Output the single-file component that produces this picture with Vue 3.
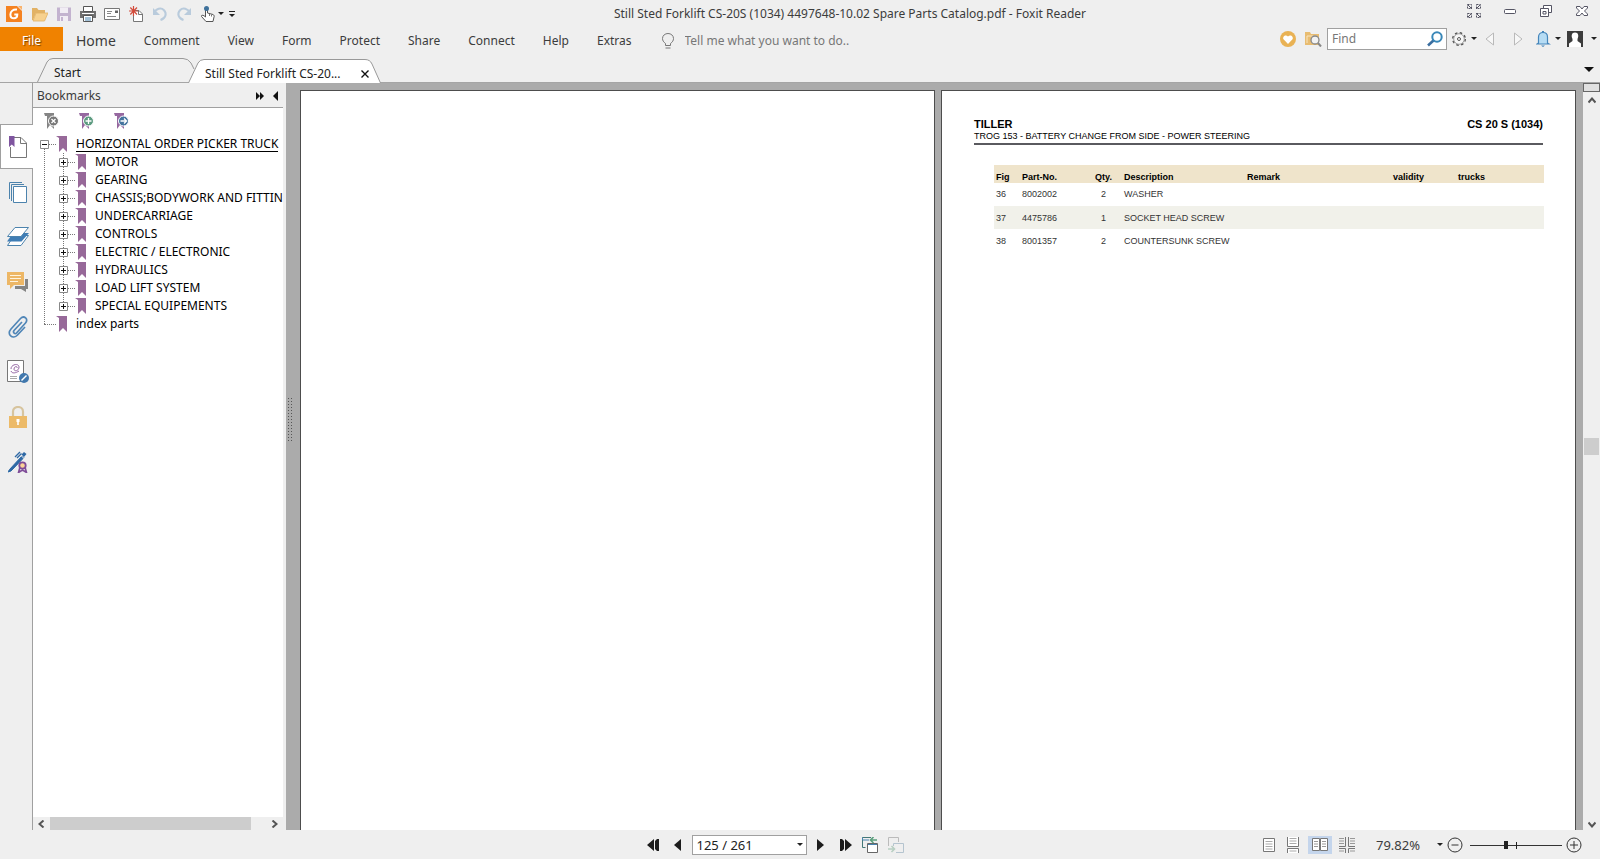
<script setup>
import { ref } from 'vue'

const menus = ['Comment', 'View', 'Form', 'Protect', 'Share', 'Connect', 'Help', 'Extras']
const chapters = [
  'MOTOR', 'GEARING', 'CHASSIS;BODYWORK AND FITTIN', 'UNDERCARRIAGE', 'CONTROLS',
  'ELECTRIC / ELECTRONIC', 'HYDRAULICS', 'LOAD LIFT SYSTEM', 'SPECIAL EQUIPEMENTS'
]
const parts = [
  { fig: 36, no: '8002002', qty: 2, text: 'WASHER' },
  { fig: 37, no: '4475786', qty: 1, text: 'SOCKET HEAD SCREW' },
  { fig: 38, no: '8001357', qty: 2, text: 'COUNTERSUNK SCREW' }
]
const page = ref('125 / 261')
const scale = ref('79.82%')
const zoom = ref(39)
const query = ref('')
const hint = ref('')
</script>

<template>
  <div class="app">
    <header class="titlebar">
      <div class="quick">
        <button class="logo" aria-label="Foxit Reader"><svg width="16" height="16" viewBox="0 0 16 16"><path d="M0 0H11L16 5V16H0Z" fill="#f58220" /><path d="M12 0H16V4Z" fill="#f9b26b" /><path d="M11 3.600C7 3.200 4.400 5.400 4.400 8.400C4.400 11 6 12.300 8 12.300C10 12.300 11.300 11 11.300 8.500H8.300" fill="none" stroke="#fff" stroke-width="2" /></svg></button>
        <button aria-label="Open"><svg width="16" height="16" viewBox="0 0 16 16"><path d="M0 14V2H5L6.500 4H13V7H4L1 14Z" fill="#e2b265" /><path d="M4 7H16L12.500 15H1Z" fill="#f7d18e" stroke="#e2b265" stroke-width=".8" /></svg></button>
        <button aria-label="Save"><svg width="16" height="16" viewBox="0 0 16 16"><path d="M1 1.500H15V15H1Z" fill="#c3b3cf" /><path d="M4 1.500H12V7H4ZM4 10H12V15H4Z" fill="#f1edf4" /><path d="M5 11H7V15H5Z" fill="#c3b3cf" /></svg></button>
        <button aria-label="Print"><svg width="16" height="16" viewBox="0 0 16 16"><path d="M0 5H16V12H0Z" fill="#707070" /><path d="M3.500 .5H12.500V5.500H3.500Z" fill="#fff" stroke="#555" /><path d="M3.500 9.500H12.500V15.500H3.500Z" fill="#fff" stroke="#555" /><path d="M2 7.500H14" stroke="#fff" /><path d="M5 12H11M5 14H11" stroke="#4782ae" /></svg></button>
        <button aria-label="E-mail"><svg width="16" height="16" viewBox="0 0 16 16"><path d="M.5 2.500H15.500V13.500H.5Z" fill="#fff" stroke="#777" /><path d="M11 4.500H14V7H11Z" fill="#666" /><path d="M3 5.500H8M3 7.500H7M3 10.500H12" stroke="#888" /></svg></button>
        <button aria-label="New from blank"><svg width="16" height="16" viewBox="0 0 16 16"><path d="M5.500 4.500H11L14.500 8V15.500H5.500Z" fill="#fff" stroke="#777" /><path d="M10.500 4.500V8.500H14.500" fill="none" stroke="#777" /><path d="M5.500 0V10M1 5H10M2.300 1.500L9 8.500M9 1.500L2.300 8.500" stroke="#d34b3b" stroke-width="1.200" /></svg></button>
        <button aria-label="Undo"><svg width="16" height="16" viewBox="0 0 16 16"><path d="M2 7C4 2.500 9 1 12 4.200C15 7.500 14 12 8.500 14" fill="none" stroke="#b9cbdc" stroke-width="2" /><path d="M1 2V9H8Z" fill="#b9cbdc" /></svg></button>
        <button aria-label="Redo"><svg width="16" height="16" viewBox="0 0 16 16"><path d="M14 7C12 2.500 7 1 4 4.200C1 7.500 2 12 7.500 14" fill="none" stroke="#b9cbdc" stroke-width="2" /><path d="M15 2V9H8Z" fill="#b9cbdc" /></svg></button>
        <button aria-label="Hand tool"><svg width="24" height="16" viewBox="0 0 24 16"><path d="M5.500 11V3C5.500 1.500 7.500 1.500 7.500 3V7L13 8.500C14 9 14.500 10 14 11L13 15.500H6L1.500 10.500C1 9 3 8.500 5.500 11" fill="#fff" stroke="#555" /><path d="M9.500 8V10M11.500 8.500V10.500" stroke="#777" /><circle cx="6.500" cy="2.500" r="2.500" fill="#3e719b" /><path d="M18 6H24L21 9Z" fill="#222" /></svg></button>
        <button aria-label="Customize toolbar"><svg width="8" height="16" viewBox="0 0 8 16"><path d="M1 5.500H7" stroke="#222" /><path d="M1 8H7L4 11Z" fill="#222" /></svg></button>
      </div>
      <h1>Still Sted Forklift CS-20S (1034) 4497648-10.02 Spare Parts Catalog.pdf - Foxit Reader</h1>
      <div class="window">
        <button aria-label="Full screen"><svg width="14" height="14" viewBox="0 0 14 14"><path d="M.5 .5H4.500V4.500H.5ZM9.500 .5H13.500V4.500H9.500ZM.5 9.500H4.500V13.500H.5ZM9.500 9.500H13.500V13.500H9.500Z" fill="none" stroke="#555564" stroke-dasharray="2 1" /><path d="M1 1L5 5M13 1L9 5M1 13L5 9M13 13L9 9" stroke="#555564" /></svg></button>
        <button aria-label="Minimize"><svg width="12" height="14" viewBox="0 0 12 14"><rect x=".5" y="5.500" width="11" height="4" rx="1" fill="#fff" stroke="#555564" /></svg></button>
        <button aria-label="Restore"><svg width="12" height="14" viewBox="0 0 12 14"><path d="M3.500 4.500V1.500H11.500V8.500H8.500M.5 4.500H8.500V12.500H.5Z" fill="#fff" stroke="#555564" /><path d="M3 7.500H6V10H3Z" fill="none" stroke="#555564" /></svg></button>
        <button aria-label="Close"><svg width="12" height="14" viewBox="0 0 12 14"><path d="M.5 2.500H4L6 5L8 2.500H11.500V4L8.500 7L11.500 10V11.500H8L6 9L4 11.500H.5V10L3.500 7L.5 4Z" fill="#fff" stroke="#555564" /></svg></button>
      </div>
    </header>

    <nav class="ribbon">
      <button class="file">File</button>
      <button class="home">Home</button>
      <button v-for="m in menus" :key="m" class="menu">{{ m }}</button>
      <label class="tell">
        <svg width="12" height="16" viewBox="0 0 12 16"><path d="M3.500 12.500V10.500C1.500 9 .5 7.500 .5 5.500C.5 2.500 3 .5 6 .5S11.500 2.500 11.500 5.500C11.500 7.500 10.500 9 8.500 10.500V12.500ZM3.500 15H8.500" fill="none" stroke="#777" /></svg>
        <input v-model="hint" aria-label="Tell me" placeholder="Tell me what you want to do..">
      </label>
      <div class="tools">
        <button aria-label="Favorite"><svg width="16" height="16" viewBox="0 0 16 16"><circle cx="8" cy="8" r="8" fill="#e9b254" /><path d="M8 13L3.500 8.300C2 6 5.500 2.800 8 5.500C10.500 2.800 14 6 12.500 8.300Z" fill="#fff" /></svg></button>
        <button class="folder" aria-label="Search folder"><svg width="17" height="16" viewBox="0 0 17 16"><path d="M0 14V1H5L6 3H14V14Z" fill="#e8bc70" /><path d="M2 5H12M2 5V12" stroke="#f9e5c1" /><circle cx="10" cy="9" r="4" fill="#f2f2f2" stroke="#888" stroke-width="1.300" /><path d="M13 12L16 15.500" stroke="#888" stroke-width="2" /></svg></button>
        <div class="find">
          <input v-model="query" aria-label="Find" placeholder="Find">
          <button aria-label="Search"><svg width="16" height="16" viewBox="0 0 16 16"><path d="M7 9L1 14.500" stroke="#3b6ea0" stroke-width="2.600" /><circle cx="10" cy="6" r="4.700" fill="#fff" stroke="#3987b8" stroke-width="2" /></svg></button>
        </div>
        <button class="gear" aria-label="Settings"><svg width="26" height="16" viewBox="0 0 26 16"><circle cx="8" cy="8" r="6.300" fill="none" stroke="#555" stroke-width="1.400" stroke-dasharray="2.500 2.450" /><circle cx="8" cy="8" r="5.300" fill="#f7f7f7" stroke="#888" stroke-width=".8" /><circle cx="8" cy="8" r="1.500" fill="#fff" stroke="#555" /><path d="M20 6H26L23 9Z" fill="#222" /></svg></button>
        <button class="prev" aria-label="Previous result"><svg width="10" height="14" viewBox="0 0 10 14"><path d="M8.500 1V13L1 7Z" fill="#f7f7f7" stroke="#b9b9b9" /></svg></button>
        <button class="next" aria-label="Next result"><svg width="10" height="14" viewBox="0 0 10 14"><path d="M1.500 1V13L9 7Z" fill="#f7f7f7" stroke="#b9b9b9" /></svg></button>
        <button class="bell" aria-label="Notifications"><svg width="25" height="16" viewBox="0 0 25 16"><path d="M2.500 12V6C2.500 3 4.500 1.500 7 1.500S11.500 3 11.500 6V12L13 13H1Z" fill="#b6dcf4" stroke="#4586bb" stroke-width="1.200" /><path d="M5 14.500H9L7 16ZM6 0H8V2H6Z" fill="#4586bb" /><path d="M19 6H25L22 9Z" fill="#222" /></svg></button>
        <button class="user" aria-label="Account"><svg width="30" height="16" viewBox="0 0 30 16"><path d="M0 0H16V16H0Z" fill="#3c3c3c" /><path d="M8 1.500C4.500 1.500 4 5 5.500 8V10L2 12.500V16H14V12.500L10.500 10V8C12 5 11.500 1.500 8 1.500Z" fill="#fff" /><path d="M24 6H30L27 9Z" fill="#222" /></svg></button>
      </div>
    </nav>

    <div class="tabs">
      <button class="tab start"><svg width="159" height="24" viewBox="0 0 159 24"><path d="M.5 24L10 4Q12 .5 16 .5H146Q151 .5 154 5L157 11" fill="none" stroke="#999" /></svg><span>Start</span></button>
      <div class="tab doc">
        <svg width="193" height="24" viewBox="0 0 193 24"><path d="M.5 24L10 4Q12 .5 16 .5H177Q182 .5 184 5L192.500 24" fill="#fff" stroke="#999" /></svg>
        <span><button>Still Sted Forklift CS-20...</button><button aria-label="Close tab"><svg width="8" height="8" viewBox="0 0 8 8"><path d="M.5 .5L7.500 7.500M7.500 .5L.5 7.500" stroke="#111" stroke-width="1.400" /></svg></button></span>
      </div>
      <button class="list" aria-label="Tab list"><svg width="10" height="5" viewBox="0 0 10 5"><path d="M0 0H10L5 5Z" fill="#111" /></svg></button>
    </div>

    <main>
      <nav class="rail">
        <button class="on" aria-label="Bookmarks"><svg width="20" height="24" viewBox="0 0 20 24"><path d="M2.500 2.500H13L18.500 8V22.500H2.500V12" fill="#fff" stroke="#777" /><path d="M12.500 2.500V8.500H18.500" fill="none" stroke="#777" /><path d="M1 1H6.500V12L3.800 9.500L1 12Z" fill="#7f559f" /></svg></button>
        <button aria-label="Pages"><svg width="20" height="24" viewBox="0 0 20 24"><path d="M1.500 19V2.500H14M3.500 21V4.500H16" fill="none" stroke="#4c83ad" /><path d="M5.500 6.500H18.500V22.500H5.500Z" fill="#fff" stroke="#4c83ad" /></svg></button>
        <button aria-label="Layers"><svg width="22" height="20" viewBox="0 0 22 20"><path d="M7 8.500H21.500L14 18.500H.5Z" fill="#fff" stroke="#4c83ad" /><path d="M6 6H22L14.500 14.500H0Z" fill="#3f7db5" /><path d="M8 .5H21.500L14 9.500H.5Z" fill="#fff" stroke="#4c83ad" /></svg></button>
        <button aria-label="Comments"><svg width="22" height="20" viewBox="0 0 22 20"><path d="M18 7H21V17H19V20L14 17H8V14H18Z" fill="#858585" /><path d="M0 0H17V13H7L3 17V13H0Z" fill="#edb766" /><path d="M3 3.500H14M3 6.500H14M3 9.500H11" stroke="#fff4df" /></svg></button>
        <button aria-label="Attachments"><svg width="20" height="22" viewBox="0 0 20 22"><path d="M14 6L6 14.500C4.500 16.500 7 18.500 8.500 17L17.500 7C21 3 16 -1 12.500 2.500L3 13C-2 18.500 5 24 9.500 19L17 11" fill="none" stroke="#5086b7" stroke-width="1.700" /></svg></button>
        <button aria-label="Digital signatures"><svg width="22" height="23" viewBox="0 0 22 23"><path d="M.5 .5H16.500V21.500H.5Z" fill="#fff" stroke="#777" /><path d="M4 9C4 4 12 3 12 7C12 11 7 12 7 9C7 6 11 6 10 8M4 11C5 14 9 13 12 11" fill="none" stroke="#9567a4" /><path d="M3 16.500H10M3 18.500H10" stroke="#aaa" /><circle cx="17" cy="18" r="5" fill="#4178ad" /><path d="M14.500 20.500L19.500 15.500" stroke="#fff" stroke-width="1.500" /></svg></button>
        <button aria-label="Security"><svg width="18" height="22" viewBox="0 0 18 22"><path d="M4 11V5.500C4 -.5 14 -.5 14 5.500V11" fill="none" stroke="#d7c49e" stroke-width="2.200" /><path d="M0 10H18V22H0Z" fill="#ecba68" /><path d="M7.500 13H10.500V16H9.800V19H8.200V16H7.500Z" fill="#fff" /></svg></button>
        <button aria-label="Sign"><svg width="20" height="22" viewBox="0 0 20 22"><path d="M14 5L1.500 18.500L0 21L3 20L16 6.500Z" fill="#2e69a5" stroke="#2e69a5" /><path d="M13.500 3.500L16 1L18.500 3L16 6Z" fill="#2e69a5" /><path d="M12 3.500L16.500 8" stroke="#efefef" stroke-width="1" /><path d="M7 6L12 1M9 7L13.500 2.500" stroke="#2e69a5" stroke-width="1.400" /><path d="M12 16L10.500 21.500L14.500 19L18.500 21.500L17 16" fill="none" stroke="#7f4d98" stroke-width="1.600" /><circle cx="14.500" cy="14.500" r="3.200" fill="#fbd497" stroke="#7f4d98" stroke-width="1.800" /></svg></button>
      </nav>

      <aside class="panel">
        <div class="panel-head">
          <h2>Bookmarks</h2>
          <button aria-label="Expand panel"><svg width="8" height="8" viewBox="0 0 8 8"><path d="M0 0L4 4L0 8ZM4 0L8 4L4 8Z" fill="#111" /></svg></button>
          <button aria-label="Collapse panel"><svg width="5" height="10" viewBox="0 0 5 10"><path d="M5 0V10L0 5Z" fill="#111" /></svg></button>
        </div>
        <div class="panel-body">
          <div class="marks">
            <button aria-label="Delete bookmark"><svg width="15" height="17" viewBox="0 0 15 17"><path d="M0 0H10V16L6 12L3 16V3H1Z" fill="#858585" /><circle cx="9.500" cy="8" r="5" fill="#777" stroke="#fff" /><path d="M7.500 6L11.500 10M11.500 6L7.500 10" stroke="#fff" stroke-width="1.300" /></svg></button>
            <button aria-label="New bookmark"><svg width="15" height="17" viewBox="0 0 15 17"><path d="M0 0H10V16L6 12L3 16V3H1Z" fill="#9668a0" /><circle cx="9.500" cy="8" r="5" fill="#5c9b80" stroke="#fff" /><path d="M6.500 8H12.500M9.500 5V11" stroke="#fff" stroke-width="1.300" /></svg></button>
            <button aria-label="Go to bookmark"><svg width="15" height="17" viewBox="0 0 15 17"><path d="M0 0H10V16L6 12L3 16V3H1Z" fill="#9668a0" /><circle cx="9.500" cy="8" r="5" fill="#44749e" stroke="#fff" /><path d="M6.500 8H12M10 5.500L12.500 8L10 10.500" fill="none" stroke="#fff" stroke-width="1.300" /></svg></button>
          </div>
          <ul class="tree">
            <li>
              <div class="row">
                <button class="toggle" aria-label="Collapse"><svg width="9" height="9" viewBox="0 0 9 9"><path d="M.5 .5H8.500V8.500H.5Z" fill="#fff" stroke="#888" /><path d="M2 4.500H7" stroke="#111" /></svg></button>
                <i class="dash"></i>
                <svg class="flag" width="11" height="16" viewBox="0 0 11 16"><path d="M0 0H11V16L7 12L3 16V2Z" fill="#976999" /></svg>
                <a href="#horizontal" class="current">HORIZONTAL ORDER PICKER TRUCK</a>
              </div>
              <ul>
                <li v-for="c in chapters" :key="c" class="row">
                  <button class="toggle" aria-label="Expand"><svg width="9" height="9" viewBox="0 0 9 9"><path d="M.5 .5H8.500V8.500H.5Z" fill="#fff" stroke="#888" /><path d="M2 4.500H7M4.500 2V7" stroke="#111" /></svg></button>
                  <i class="dash"></i>
                  <svg class="flag" width="11" height="16" viewBox="0 0 11 16"><path d="M0 0H11V16L7 12L3 16V2Z" fill="#976999" /></svg>
                  <a href="#chapter">{{ c }}</a>
                </li>
              </ul>
            </li>
            <li class="row leaf">
              <i class="dash"></i>
              <svg class="flag" width="11" height="16" viewBox="0 0 11 16"><path d="M0 0H11V16L7 12L3 16V2Z" fill="#976999" /></svg>
              <a href="#index">index parts</a>
            </li>
          </ul>
        </div>
        <div class="hscroll">
          <button aria-label="Scroll left"><svg width="7" height="8" viewBox="0 0 7 8"><path d="M5.500 .5L1.500 4L5.500 7.500" fill="none" stroke="#555" stroke-width="2" /></svg></button>
          <div class="track"><i></i></div>
          <button aria-label="Scroll right"><svg width="7" height="8" viewBox="0 0 7 8"><path d="M1.500 .5L5.500 4L1.500 7.500" fill="none" stroke="#555" stroke-width="2" /></svg></button>
        </div>
      </aside>

      <div class="splitter"><i></i></div>

      <section class="viewer">
        <article class="sheet"></article>
        <article class="sheet">
          <div class="sheet-head">
            <div>
              <h3>TILLER</h3>
              <p>TROG 153 - BATTERY CHANGE FROM SIDE - POWER STEERING</p>
            </div>
            <strong>CS 20 S (1034)</strong>
          </div>
          <table>
            <colgroup><col class="c-fig"><col class="c-no"><col class="c-qty"><col class="c-text"><col class="c-remark"><col class="c-valid"><col></colgroup>
            <thead>
              <tr><th>Fig</th><th>Part-No.</th><th class="qty">Qty.</th><th>Description</th><th>Remark</th><th>validity</th><th>trucks</th></tr>
            </thead>
            <tbody>
              <tr v-for="p in parts" :key="p.fig">
                <td>{{ p.fig }}</td><td>{{ p.no }}</td><td class="qty">{{ p.qty }}</td><td>{{ p.text }}</td><td></td><td></td><td></td>
              </tr>
            </tbody>
          </table>
        </article>
      </section>

      <div class="vscroll">
        <button class="split" aria-label="Split view"></button>
        <button aria-label="Scroll up"><svg width="8" height="7" viewBox="0 0 8 7"><path d="M.5 5.500L4 1.500L7.500 5.500" fill="none" stroke="#555" stroke-width="2" /></svg></button>
        <div class="track"><i></i></div>
        <button class="down" aria-label="Scroll down"><svg width="8" height="7" viewBox="0 0 8 7"><path d="M.5 1.500L4 5.500L7.500 1.500" fill="none" stroke="#555" stroke-width="2" /></svg></button>
      </div>
    </main>

    <footer>
      <div class="pager">
        <button aria-label="First page"><svg width="12" height="12" viewBox="0 0 12 12"><path d="M7 0V12L0 6ZM10 0H12V12H10L8 10V2Z" fill="#1c1c1c" /><path d="M7.500 0V12" stroke="#efefef" /></svg></button>
        <button class="back" aria-label="Previous page"><svg width="8" height="12" viewBox="0 0 8 12"><path d="M7 0V12L0 6Z" fill="#1c1c1c" /></svg></button>
        <div class="combo">
          <select v-model="page" aria-label="Page"><option>125 / 261</option></select>
          <svg width="6" height="3" viewBox="0 0 6 3"><path d="M0 0H6L3 3Z" fill="#222" /></svg>
        </div>
        <button class="forward" aria-label="Next page"><svg width="8" height="12" viewBox="0 0 8 12"><path d="M0 0V12L7 6Z" fill="#1c1c1c" /></svg></button>
        <button aria-label="Last page"><svg width="12" height="12" viewBox="0 0 12 12"><path d="M5 0V12L12 6ZM2 0H0V12H2L4 10V2Z" fill="#1c1c1c" /><path d="M4.500 0V12" stroke="#efefef" /></svg></button>
        <button aria-label="Previous view"><svg width="16" height="16" viewBox="0 0 16 16"><path d="M3.500 10.500H.5V.5H9" fill="none" stroke="#477" /><path d="M.5 .5V3H7" fill="none" stroke="#4782ae" /><path d="M5.500 6.500H15.500V15.500H5.500Z" fill="#fff" stroke="#666" /><path d="M6 7.500H15" stroke="#4782ae" /><path d="M15 3H9M11.500 0L8.500 3L11.500 6" fill="none" stroke="#5a9f7c" stroke-width="1.600" /></svg></button>
        <button aria-label="Next view"><svg width="16" height="16" viewBox="0 0 16 16"><path d="M.5 9V.5H10.500V5" fill="none" stroke="#bbb" /><path d="M5.500 9V6.500H15.500V15.500H8" fill="none" stroke="#b5c4cf" /><path d="M0 12H6M3.500 9L6.500 12L3.500 15" fill="none" stroke="#b8cfc2" stroke-width="1.600" /></svg></button>
      </div>
      <div class="views">
        <button aria-label="Single page"><svg width="12" height="16" viewBox="0 0 12 16"><path d="M.5 1.500H11.500V14.500H.5Z" fill="#fff" stroke="#777" /><path d="M2.500 4.500H9.500M2.500 7H9.500M2.500 9.500H9.500M2.500 12H9.500" stroke="#aaa" /></svg></button>
        <button aria-label="Continuous"><svg width="12" height="16" viewBox="0 0 12 16"><path d="M.5 0V9.500H11.500V0M.5 16V11.500H11.500V16" fill="#fff" stroke="#777" /><path d="M2.500 1.500H9.500M2.500 4H9.500M2.500 6.500H9.500M2.500 14H9.500" stroke="#aaa" /></svg></button>
        <button class="on" aria-label="Facing"><svg width="16" height="16" viewBox="0 0 16 16"><path d="M.5 1.500H7.500V13.500H.5ZM8.500 1.500H15.500V13.500H8.500Z" fill="#fff" stroke="#777" /><path d="M2 4.500H6M2 7H6M2 9.500H6M10 4.500H14M10 7H14M10 9.500H14" stroke="#999" /></svg></button>
        <button aria-label="Continuous facing"><svg width="16" height="16" viewBox="0 0 16 16"><path d="M6.500 0V9.500H0M9.500 0V9.500H16M6.500 16V11.500H0M9.500 16V11.500H16" fill="none" stroke="#777" /><path d="M0 1.500H5M0 4H5M0 6.500H5M0 14H5M11 1.500H16M11 4H16M11 6.500H16M11 14H16" stroke="#999" /></svg></button>
      </div>
      <div class="combo scale">
        <select v-model="scale" aria-label="Zoom level"><option>79.82%</option></select>
        <svg width="6" height="3" viewBox="0 0 6 3"><path d="M0 0H6L3 3Z" fill="#222" /></svg>
      </div>
      <div class="zoom">
        <button aria-label="Zoom out"><svg width="16" height="16" viewBox="0 0 16 16"><circle cx="8" cy="8" r="7" fill="none" stroke="#333" /><path d="M4.500 8H11.500" stroke="#333" /></svg></button>
        <input v-model="zoom" type="range" min="0" max="100" aria-label="Zoom">
        <button aria-label="Zoom in"><svg width="16" height="16" viewBox="0 0 16 16"><circle cx="8" cy="8" r="7" fill="none" stroke="#333" /><path d="M4 8H12M8 4V12" stroke="#333" /></svg></button>
      </div>
    </footer>
  </div>
</template>

<style>
body { background: #efefef; }
</style>

<style scoped>
* { box-sizing: border-box; }
.app {
  display: flex; flex-direction: column; height: 100vh; overflow: hidden;
  background: #efefef; color: #3c3c3c;
  font: 12px/16px "Noto Sans", "DejaVu Sans Condensed", sans-serif;
}
button, input, select { font: inherit; color: inherit; border: 0; padding: 0; margin: 0; background: none; border-radius: 0; outline: 0; }
button { display: flex; align-items: center; justify-content: center; white-space: nowrap; }
svg { display: block; flex: none; }
h1, h2, h3, p, ul { margin: 0; padding: 0; font: inherit; list-style: none; }

.titlebar { display: flex; height: 27px; align-items: center; flex: none; }
.quick { display: flex; gap: 8px; padding-left: 6px; width: 244px; flex: none; }
.quick .logo { margin-right: 2px; }
.quick button:last-child { margin-left: -4px; }
h1 { flex: 1; text-align: center; white-space: nowrap; min-width: 0; overflow: hidden; }
.window { display: flex; align-self: flex-start; }
.window button { width: 36px; height: 22px; }

.ribbon { display: flex; height: 28px; flex: none; align-items: flex-start; }
.ribbon > button { height: 28px; }
.ribbon .file { width: 63px; height: 24px; padding-top: 3px; background: #f08200; color: #fff; text-shadow: 1px 1px 1px #7a4200; }
.home { margin-left: 13px; font-size: 14px; }
.menu { margin-left: 28px; }
.tell { display: flex; align-items: center; height: 28px; gap: 11px; margin-left: 30px; }
.tell input { width: 220px; }
input::placeholder { color: #777; opacity: 1; }
.tools { display: flex; align-items: center; height: 24px; margin-left: auto; padding-right: 3px; }
.folder { margin-left: 9px; }
.find { display: flex; width: 120px; height: 22px; margin-left: 5px; padding: 0 3px 0 4px; background: #fff; border: 1px solid #a0a0a0; }
.find input { flex: 1; min-width: 0; }
.gear { margin-left: 4px; }
.prev { margin-left: 8px; }
.next { margin-left: 18px; }
.bell { margin-left: 13px; }
.user { margin-left: 6px; }

.tabs { display: flex; height: 28px; flex: none; align-items: flex-end; padding-left: 37px; border-bottom: 1px solid #a5a5a5; }
.tab { display: grid; height: 24px; flex: none; text-align: left; justify-content: start; align-items: stretch; }
.tab > svg, .tab > span { grid-area: 1 / 1; }
.tab > span { display: flex; align-items: center; padding: 5px 0 0 17px; height: 24px; color: #222; }
.start { width: 151px; }
.doc { width: 193px; margin-bottom: -1px; }
.doc > span { justify-content: space-between; padding-right: 12px; }
.list { margin: 0 6px 10px auto; }

main { display: flex; flex: 1; min-height: 0; }
.rail { display: grid; grid-template-rows: 41px; grid-auto-rows: 45px; width: 33px; flex: none; align-content: start; border-right: 1px solid #a0a0a0; }
.rail::before { content: ""; }
.rail button { padding-left: 4px; }
.rail .on { margin-right: -1px; background: #fff; border: 1px solid #a0a0a0; border-right: 0; padding-left: 2px; }

.panel { display: flex; flex-direction: column; width: 253px; flex: none; padding-right: 3px; }
.panel-head { display: flex; height: 25px; flex: none; align-items: center; gap: 9px; padding: 1px 5px 0 4px; border-bottom: 1px solid #a0a0a0; }
.panel-head h2 { flex: 1; }
.panel-body { flex: 1; min-height: 0; overflow: hidden; background: #fff; }
.marks { display: flex; gap: 20px; height: 27px; align-items: center; padding-left: 11px; }
.tree { position: relative; color: #000; }
.tree ul { position: relative; margin-left: 19px; }
.row { display: flex; height: 18px; align-items: center; padding-left: 7px; white-space: nowrap; }
.toggle { position: relative; z-index: 1; }
.dash { width: 7px; flex: none; border-top: 1px dotted #777; }
.leaf { padding-left: 11px; }
.leaf .dash { width: 12px; }
.flag { margin-right: 9px; }
.row a { color: #000; text-decoration: none; }
.row .current { line-height: 14px; border-bottom: 1px solid #000; }
.tree::before { content: ""; position: absolute; left: 11px; top: 12px; bottom: 9px; border-left: 1px dotted #777; }
.tree ul::before { content: ""; position: absolute; left: 11px; top: 0; bottom: 9px; border-left: 1px dotted #777; }
.hscroll { display: flex; height: 13px; flex: none; }
.hscroll button { width: 17px; }
.track { flex: 1; display: flex; }
.track i { background: #cdcdcd; }
.hscroll .track i { width: 93%; }

.splitter { width: 14px; flex: none; background: #ababab; display: flex; justify-content: center; }
.splitter i { width: 4px; height: 44px; margin-top: 315px; margin-right: 6px; background: linear-gradient(#ababab, #ababab) 1px 0 / 2px 100% no-repeat, repeating-linear-gradient(#555 0 1px, transparent 1px 3px); }
.viewer { display: flex; flex: 1; gap: 6px; min-width: 0; padding: 7px 7px 0 0; background: #ababab; }
.sheet { flex: 1; min-width: 0; padding: 26px 32px 0; background: #fff; border: 1px solid #4d4d4d; border-bottom: 0; color: #000; font: 9px/12px "Liberation Sans", Arial, sans-serif; }
.sheet-head { display: flex; justify-content: space-between; border-bottom: 2px solid #5a5a5f; padding-bottom: 1px; margin-bottom: 20px; white-space: nowrap; }
.sheet-head h3, .sheet-head strong { font-size: 11px; font-weight: bold; line-height: 14px; }
.sheet-head p { line-height: 11px; }
table { width: calc(100% - 19px); margin-left: 20px; border-collapse: collapse; table-layout: fixed; }
th, td { padding: 0 0 0 2px; text-align: left; white-space: nowrap; }
th { height: 18px; padding-top: 5px; background: #efe4cb; }
td { height: 23px; color: #333; }
tr:nth-child(even) td { background: #f1f1ea; }
tbody tr:first-child td { padding-bottom: 2px; }
th.qty, td.qty { text-align: center; padding-right: 10px; }
.c-fig { width: 26px; } .c-no { width: 73px; } .c-qty { width: 29px; } .c-text { width: 123px; } .c-remark { width: 146px; } .c-valid { width: 65px; }

.vscroll { display: flex; flex-direction: column; width: 17px; flex: none; }
.vscroll button { height: 16px; flex: none; }
.vscroll .split { height: 9px; border: 1px solid #666; background: #e0e0e0; }
.vscroll .down { height: 12px; }
.vscroll .track { padding: 0 1px; flex-direction: column; }
.vscroll .track::before { content: ""; flex: 330; }
.vscroll .track::after { content: ""; flex: 364; }
.vscroll .track i { height: 17px; }

footer { display: flex; align-items: center; height: 29px; flex: none; padding-right: 18px; }
.pager { display: flex; flex: 1; align-items: center; justify-content: center; gap: 10px; padding-left: 290px; }
.back { margin-left: 5px; }
.forward { margin-right: 5px; }
.combo { display: grid; align-items: center; }
.combo > * { grid-area: 1 / 1; }
.combo svg { justify-self: end; margin-right: 4px; pointer-events: none; }
.combo select { appearance: none; width: 115px; height: 20px; padding: 0 4px; background: #fff; border: 1px solid #a0a0a0; color: #222; font-size: 13px; line-height: 16px; }
.combo.scale select { width: 70px; padding: 0; border: 0; background: none; color: #3c3c3c; }
.combo.scale svg { margin-right: 3px; }
.views { display: flex; align-items: center; gap: 6px; margin-right: 20px; }
.views button { height: 18px; min-width: 18px; }
.views .on { width: 24px; background: #c4d5ec; }
.zoom { display: flex; align-items: center; gap: 4px; margin-left: 1px; }
input[type="range"] { appearance: none; width: 92px; height: 16px; margin-left: 3px; background: linear-gradient(#222, #222) 46px 5px / 1px 7px no-repeat, linear-gradient(#333, #333) 0 8px / 100% 1px no-repeat; }
input[type="range"]::-webkit-slider-thumb { appearance: none; width: 4px; height: 8px; background: #222; }
</style>
